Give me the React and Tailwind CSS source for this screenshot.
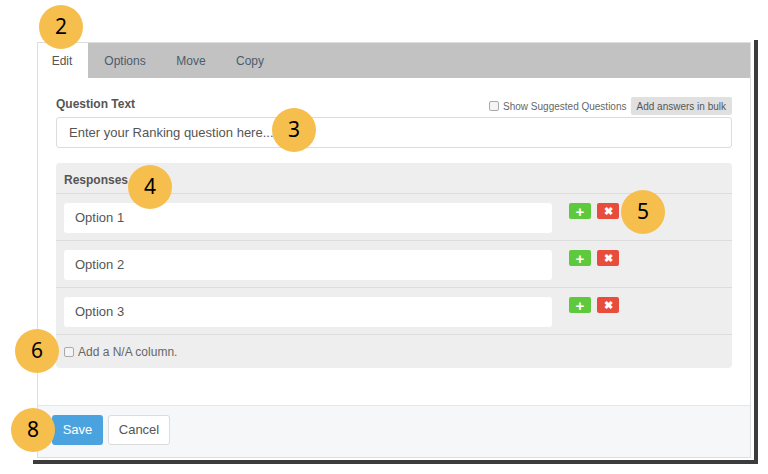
import React from "react";

const Badge = ({ n, className }) => (
  <div
    className={`absolute w-[44px] h-[44px] rounded-full bg-[#f6be4c] flex items-center justify-center text-[21px] text-black ${className}`}
    style={{ fontFamily: '"Noto Sans", sans-serif' }}
  >
    {n}
  </div>
);

const Check = () => (
  <span className="inline-block w-[10px] h-[10px] border border-[#aaa] rounded-[2px] bg-[#f4f4f4] mr-[4px]" />
);

const OptionRow = ({ label }) => (
  <div className="h-[47px] border-b border-[#dcdcdc] flex items-start pt-[9px] px-[8px]">
    <div className="w-[488px] h-[30px] bg-white rounded-[3px] flex items-center pl-[11px] text-[13px] text-[#555]">
      {label}
    </div>
    <div className="flex gap-[6px] ml-[17px]">
      <button className="w-[22px] h-[16px] rounded-[2px] bg-[#5ec93c] text-white text-[15px] font-bold leading-none flex items-center justify-center">
        +
      </button>
      <button className="w-[22px] h-[16px] rounded-[2px] bg-[#e74c3c] text-white text-[11px] font-bold leading-none flex items-center justify-center">
        ✖
      </button>
    </div>
  </div>
);

export default function App() {
  return (
    <div
      className="relative w-[768px] h-[474px] bg-white pt-[40px]"
      style={{ fontFamily: '"Liberation Sans", Arial, sans-serif' }}
    >
      {/* frame with dark drop edge */}
      <div className="ml-[33px] w-[725px] h-[424px] border-r-[4px] border-b-[4px] border-[#3c3c3c] pl-[4px] pt-[2px]">
        <div className="w-[714px] h-[416px] border border-[#dedede] bg-white flex flex-col">
          {/* Tabs */}
          <div className="h-[35px] flex bg-[#c2c2c2] text-[12px] text-[#4d5b6b]">
            <div className="w-[50px] bg-white flex items-center justify-center text-[#555] pr-[2px]">Edit</div>
            <div className="w-[74px] flex items-center justify-center">Options</div>
            <div className="w-[58px] flex items-center justify-center">Move</div>
            <div className="w-[60px] flex items-center justify-center">Copy</div>
          </div>

          {/* Body */}
          <div className="px-[18px] pt-[19px] flex-1">
            <div className="h-[18px] flex items-end justify-between">
              <span className="text-[12px] font-bold text-[#555] pb-[2px]">Question Text</span>
              <div className="flex items-center gap-[4px]">
                <span className="flex items-center text-[10px] text-[#666]">
                  <Check />
                  Show Suggested Questions
                </span>
                <button className="h-[18px] px-[6px] bg-[#e0e0e0] rounded-[2px] text-[10px] text-[#555]">
                  Add answers in bulk
                </button>
              </div>
            </div>
            <div className="mt-[2px] h-[31px] border border-[#dcdcdc] rounded-[3px] flex items-center pl-[12px] text-[13px] text-[#555]">
              Enter your Ranking question here...
            </div>

            <div className="mt-[15px] bg-[#eeeeee] rounded-[4px]">
              <div className="h-[31px] border-b border-[#dcdcdc] px-[8px] pt-[8px] text-[12px] font-bold text-[#555]">
                Responses
              </div>
              <OptionRow label="Option 1" />
              <OptionRow label="Option 2" />
              <OptionRow label="Option 3" />
              <div className="h-[33px] flex items-center px-[8px] text-[12px] text-[#666]">
                <Check />
                Add a N/A column.
              </div>
            </div>
          </div>

          {/* Footer */}
          <div className="h-[52px] bg-[#f5f7f9] border-t border-[#e6e6e6] flex items-start pt-[9px] pl-[14px] gap-[5px]">
            <button className="w-[51px] h-[30px] bg-[#4aa3df] rounded-[3px] text-white text-[13px]">Save</button>
            <button className="w-[62px] h-[30px] bg-white border border-[#dcdcdc] rounded-[3px] text-[#555] text-[13px]">
              Cancel
            </button>
          </div>
        </div>
      </div>

      <Badge n="2" className="left-[39px] top-[5px]" />
      <Badge n="3" className="left-[272px] top-[108px]" />
      <Badge n="4" className="left-[128px] top-[165px]" />
      <Badge n="5" className="left-[621px] top-[190px]" />
      <Badge n="6" className="left-[15px] top-[329px]" />
      <Badge n="8" className="left-[11px] top-[408px]" />
    </div>
  );
}
